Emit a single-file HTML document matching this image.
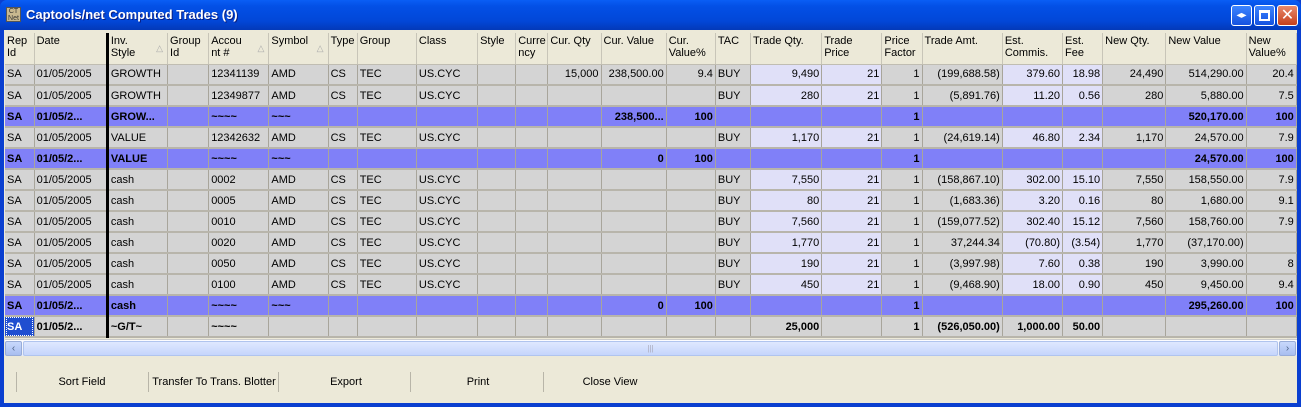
<!DOCTYPE html>
<html><head><meta charset="utf-8"><style>
*{margin:0;padding:0;box-sizing:border-box}
body{width:1301px;height:407px;overflow:hidden;background:#0a3fd0;font-family:"Liberation Sans",sans-serif;font-size:11px;position:relative}
#title{position:absolute;left:0;top:0;width:1301px;height:30px;background:linear-gradient(#0a5ef5,#0350e6 20%,#0247d8 70%,#0339b8);border-radius:7px 7px 0 0}
#title .t{position:absolute;left:26px;top:7px;color:#fff;font-weight:bold;font-size:13px;text-shadow:1px 1px #0a1e80}
#ico{position:absolute;left:6px;top:7px;width:15px;height:15px;background:#c8b890;border:1px solid #555;font-size:7px;color:#333;line-height:7px;text-align:center}
.tb{position:absolute;top:5px;width:21px;height:21px;border:1px solid #fff;border-radius:3px;background:linear-gradient(#3c84ff,#1552e0)}
#client{position:absolute;left:4px;top:30px;width:1293px;height:373px;background:#ece9d8}
#grid{position:absolute;left:1px;top:3px;width:1292px;height:305px;background:#d4d0c8;overflow:hidden}
table{border-collapse:collapse;table-layout:fixed;width:1297px}
td,th{border-right:1px solid #a8a59b;border-bottom:2px solid #b8b5ab;height:21px;padding:0 2px;white-space:nowrap;overflow:hidden;font-weight:normal;text-align:left;color:#000}
th{height:31px;background:#ece9d8;vertical-align:top;padding-top:2px;line-height:12px;border-bottom:1px solid #c0bdb2;border-right:1px solid #c8c5b8;position:relative}
th .a{position:absolute;right:4px;top:9px;color:#aaa;font-size:9px}
td{background:#d4d4d4}
td.r{text-align:right}
td.l{background:#e0e0f8}
tr.s td{background:#8080f8;font-weight:bold}
tr.g td{font-weight:bold}
.bk{border-left:3px solid #000}
.sel{background:#1f4ed0!important;color:#fff!important;outline:1px dotted #fff;outline-offset:-2px}
#sb{position:absolute;left:1px;top:309px;width:1292px;height:17px;background:linear-gradient(#fdfdff,#e6ebf8);border-top:1px solid #ccc}
.sbb{position:absolute;top:1px;width:17px;height:15px;background:linear-gradient(#c8d8fc,#a8bef0);border:1px solid #98acd8;border-radius:2px;color:#4d6185;font-size:10px;text-align:center;line-height:13px}
#thumb{position:absolute;left:18px;top:1px;width:1255px;height:15px;background:linear-gradient(#dfe8fe,#c5d5fc);border:1px solid #b0c4ee;border-radius:2px;text-align:center;color:#aab;font-size:8px;line-height:13px}
.btn{position:absolute;top:346px;width:130px;text-align:center;font-size:11px}
.sep{position:absolute;top:342px;width:1px;height:20px;background:#b8b5a8}
</style></head><body>
<div id="title"><div id="ico">CT<br>Net</div><div class="t">Captools/net Computed Trades (9)</div>
<div class="tb" style="left:1231px;color:#fff;font-size:10px;text-align:center;line-height:19px">◂▸</div>
<div class="tb" style="left:1254px"><div style="position:absolute;left:4px;top:4px;width:11px;height:11px;border:2px solid #fff;border-top-width:3px"></div></div>
<div class="tb" style="left:1277px;background:linear-gradient(#e88a6c,#c6401c);color:#fff;font-size:16px;text-align:center;line-height:19px">✕</div>
</div>
<div id="client">
<div id="grid"><table>
<colgroup><col style="width:29px"><col style="width:73px"><col style="width:60px"><col style="width:41px"><col style="width:60px"><col style="width:59px"><col style="width:29px"><col style="width:59px"><col style="width:61px"><col style="width:38px"><col style="width:32px"><col style="width:53px"><col style="width:65px"><col style="width:49px"><col style="width:35px"><col style="width:71px"><col style="width:60px"><col style="width:40px"><col style="width:80px"><col style="width:60px"><col style="width:40px"><col style="width:63px"><col style="width:80px"><col style="width:50px"><col style="width:5px"></colgroup>
<tr><th>Rep<br>Id</th><th>Date</th><th class="bk">Inv.<br>Style<span class="a">△</span></th><th>Group<br>Id</th><th>Accou<br>nt #<span class="a">△</span></th><th>Symbol<span class="a">△</span></th><th>Type</th><th>Group</th><th>Class</th><th>Style</th><th>Curre<br>ncy</th><th>Cur. Qty</th><th>Cur. Value</th><th>Cur.<br>Value%</th><th>TAC</th><th>Trade Qty.</th><th>Trade<br>Price</th><th>Price<br>Factor</th><th>Trade Amt.</th><th>Est.<br>Commis.</th><th>Est.<br>Fee</th><th>New Qty.</th><th>New Value</th><th>New<br>Value%</th><th>I</th></tr>
<tr><td>SA</td><td>01/05/2005</td><td class="bk">GROWTH</td><td></td><td>12341139</td><td>AMD</td><td>CS</td><td>TEC</td><td>US.CYC</td><td></td><td></td><td class="r">15,000</td><td class="r">238,500.00</td><td class="r">9.4</td><td>BUY</td><td class="r l">9,490</td><td class="r l">21</td><td class="r">1</td><td class="r">(199,688.58)</td><td class="r l">379.60</td><td class="r l">18.98</td><td class="r">24,490</td><td class="r">514,290.00</td><td class="r">20.4</td><td>A</td></tr>
<tr><td>SA</td><td>01/05/2005</td><td class="bk">GROWTH</td><td></td><td>12349877</td><td>AMD</td><td>CS</td><td>TEC</td><td>US.CYC</td><td></td><td></td><td></td><td></td><td></td><td>BUY</td><td class="r l">280</td><td class="r l">21</td><td class="r">1</td><td class="r">(5,891.76)</td><td class="r l">11.20</td><td class="r l">0.56</td><td class="r">280</td><td class="r">5,880.00</td><td class="r">7.5</td><td>A</td></tr>
<tr class="s"><td>SA</td><td>01/05/2...</td><td class="bk">GROW...</td><td></td><td>~~~~</td><td>~~~</td><td></td><td></td><td></td><td></td><td></td><td></td><td class="r">238,500...</td><td class="r">100</td><td></td><td></td><td></td><td class="r">1</td><td></td><td></td><td></td><td></td><td class="r">520,170.00</td><td class="r">100</td><td></td></tr>
<tr><td>SA</td><td>01/05/2005</td><td class="bk">VALUE</td><td></td><td>12342632</td><td>AMD</td><td>CS</td><td>TEC</td><td>US.CYC</td><td></td><td></td><td></td><td></td><td></td><td>BUY</td><td class="r l">1,170</td><td class="r l">21</td><td class="r">1</td><td class="r">(24,619.14)</td><td class="r l">46.80</td><td class="r l">2.34</td><td class="r">1,170</td><td class="r">24,570.00</td><td class="r">7.9</td><td>A</td></tr>
<tr class="s"><td>SA</td><td>01/05/2...</td><td class="bk">VALUE</td><td></td><td>~~~~</td><td>~~~</td><td></td><td></td><td></td><td></td><td></td><td></td><td class="r">0</td><td class="r">100</td><td></td><td></td><td></td><td class="r">1</td><td></td><td></td><td></td><td></td><td class="r">24,570.00</td><td class="r">100</td><td></td></tr>
<tr><td>SA</td><td>01/05/2005</td><td class="bk">cash</td><td></td><td>0002</td><td>AMD</td><td>CS</td><td>TEC</td><td>US.CYC</td><td></td><td></td><td></td><td></td><td></td><td>BUY</td><td class="r l">7,550</td><td class="r l">21</td><td class="r">1</td><td class="r">(158,867.10)</td><td class="r l">302.00</td><td class="r l">15.10</td><td class="r">7,550</td><td class="r">158,550.00</td><td class="r">7.9</td><td>A</td></tr>
<tr><td>SA</td><td>01/05/2005</td><td class="bk">cash</td><td></td><td>0005</td><td>AMD</td><td>CS</td><td>TEC</td><td>US.CYC</td><td></td><td></td><td></td><td></td><td></td><td>BUY</td><td class="r l">80</td><td class="r l">21</td><td class="r">1</td><td class="r">(1,683.36)</td><td class="r l">3.20</td><td class="r l">0.16</td><td class="r">80</td><td class="r">1,680.00</td><td class="r">9.1</td><td>A</td></tr>
<tr><td>SA</td><td>01/05/2005</td><td class="bk">cash</td><td></td><td>0010</td><td>AMD</td><td>CS</td><td>TEC</td><td>US.CYC</td><td></td><td></td><td></td><td></td><td></td><td>BUY</td><td class="r l">7,560</td><td class="r l">21</td><td class="r">1</td><td class="r">(159,077.52)</td><td class="r l">302.40</td><td class="r l">15.12</td><td class="r">7,560</td><td class="r">158,760.00</td><td class="r">7.9</td><td>A</td></tr>
<tr><td>SA</td><td>01/05/2005</td><td class="bk">cash</td><td></td><td>0020</td><td>AMD</td><td>CS</td><td>TEC</td><td>US.CYC</td><td></td><td></td><td></td><td></td><td></td><td>BUY</td><td class="r l">1,770</td><td class="r l">21</td><td class="r">1</td><td class="r">37,244.34</td><td class="r l">(70.80)</td><td class="r l">(3.54)</td><td class="r">1,770</td><td class="r">(37,170.00)</td><td class="r"></td><td>A</td></tr>
<tr><td>SA</td><td>01/05/2005</td><td class="bk">cash</td><td></td><td>0050</td><td>AMD</td><td>CS</td><td>TEC</td><td>US.CYC</td><td></td><td></td><td></td><td></td><td></td><td>BUY</td><td class="r l">190</td><td class="r l">21</td><td class="r">1</td><td class="r">(3,997.98)</td><td class="r l">7.60</td><td class="r l">0.38</td><td class="r">190</td><td class="r">3,990.00</td><td class="r">8</td><td>A</td></tr>
<tr><td>SA</td><td>01/05/2005</td><td class="bk">cash</td><td></td><td>0100</td><td>AMD</td><td>CS</td><td>TEC</td><td>US.CYC</td><td></td><td></td><td></td><td></td><td></td><td>BUY</td><td class="r l">450</td><td class="r l">21</td><td class="r">1</td><td class="r">(9,468.90)</td><td class="r l">18.00</td><td class="r l">0.90</td><td class="r">450</td><td class="r">9,450.00</td><td class="r">9.4</td><td>A</td></tr>
<tr class="s"><td>SA</td><td>01/05/2...</td><td class="bk">cash</td><td></td><td>~~~~</td><td>~~~</td><td></td><td></td><td></td><td></td><td></td><td></td><td class="r">0</td><td class="r">100</td><td></td><td></td><td></td><td class="r">1</td><td></td><td></td><td></td><td></td><td class="r">295,260.00</td><td class="r">100</td><td></td></tr>
<tr class="g"><td class="sel">SA</td><td>01/05/2...</td><td class="bk">~G/T~</td><td></td><td>~~~~</td><td></td><td></td><td></td><td></td><td></td><td></td><td></td><td></td><td></td><td></td><td class="r">25,000</td><td></td><td class="r">1</td><td class="r">(526,050.00)</td><td class="r">1,000.00</td><td class="r">50.00</td><td></td><td></td><td></td><td></td></tr>
</table></div>
<div id="sb"><div class="sbb" style="left:0">‹</div><div id="thumb">|||</div><div class="sbb" style="left:1274px">›</div></div>
<div class="sep" style="left:12px"></div><div class="sep" style="left:144px"></div><div class="sep" style="left:274px"></div><div class="sep" style="left:406px"></div><div class="sep" style="left:539px"></div>
<div class="btn" style="left:13px">Sort Field</div>
<div class="btn" style="left:145px">Transfer To Trans. Blotter</div>
<div class="btn" style="left:277px">Export</div>
<div class="btn" style="left:409px">Print</div>
<div class="btn" style="left:541px">Close View</div>
</div>
</body></html>
